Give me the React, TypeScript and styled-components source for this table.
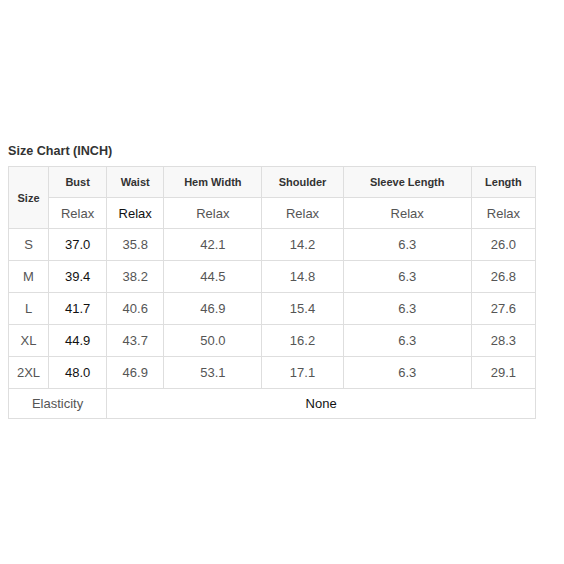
import React from 'react'
import styled, { createGlobalStyle } from 'styled-components'

const GlobalStyle = createGlobalStyle`
  body {
    margin: 0;
    background: #fff;
    font-family: "Liberation Sans", Arial, sans-serif;
  }
`

const columns = [
  { label: 'Bust', width: 58 },
  { label: 'Waist', width: 57 },
  { label: 'Hem Width', width: 98 },
  { label: 'Shoulder', width: 81 },
  { label: 'Sleeve Length', width: 128 },
  { label: 'Length', width: 64 }
]

const rows = [
  { size: 'S', values: ['37.0', '35.8', '42.1', '14.2', '6.3', '26.0'] },
  { size: 'M', values: ['39.4', '38.2', '44.5', '14.8', '6.3', '26.8'] },
  { size: 'L', values: ['41.7', '40.6', '46.9', '15.4', '6.3', '27.6'] },
  { size: 'XL', values: ['44.9', '43.7', '50.0', '16.2', '6.3', '28.3'] },
  { size: '2XL', values: ['48.0', '46.9', '53.1', '17.1', '6.3', '29.1'] }
]

export default function App() {
  return (
    <>
      <GlobalStyle />
      <PageWrapper>
        <Title>Size Chart (INCH)</Title>
        <Table>
          <colgroup>
            <col style={{ width: 40 }} />
            {columns.map(c => (
              <col key={c.label} style={{ width: c.width }} />
            ))}
          </colgroup>
          <tbody>
            <Row $h={31}>
              <HeadCell rowSpan={2}>Size</HeadCell>
              {columns.map(c => (
                <HeadCell key={c.label}>{c.label}</HeadCell>
              ))}
            </Row>
            <Row $h={31}>
              {columns.map((c, i) => (
                <Cell key={c.label} $dark={i === 1}>Relax</Cell>
              ))}
            </Row>
            {rows.map(r => (
              <Row key={r.size} $h={32}>
                <Cell>{r.size}</Cell>
                {r.values.map((v, i) => (
                  <Cell key={i} $dark={i === 0}>{v}</Cell>
                ))}
              </Row>
            ))}
            <Row $h={30}>
              <Cell colSpan={2}>Elasticity</Cell>
              <Cell colSpan={5} $dark>None</Cell>
            </Row>
          </tbody>
        </Table>
      </PageWrapper>
    </>
  )
}

const PageWrapper = styled.div`
  padding: 143px 8px 0;
`

const Title = styled.div`
  font-size: 12.6px;
  font-weight: 700;
  color: #333;
  margin-bottom: 6px;
  line-height: 17px;
`

const Table = styled.table`
  border-collapse: collapse;
  table-layout: fixed;
  width: 528px;
`

const Row = styled.tr<{ $h: number }>`
  height: ${p => p.$h}px;
`

const HeadCell = styled.td`
  border: 1px solid #dedede;
  background: #f8f8f8;
  color: #333;
  font-size: 11px;
  font-weight: 700;
  text-align: center;
  vertical-align: middle;
  padding: 0;
`

const Cell = styled.td<{ $dark?: boolean }>`
  border: 1px solid #dedede;
  background: #fff;
  color: ${p => (p.$dark ? '#111' : '#555')};
  font-size: 13px;
  text-align: center;
  vertical-align: middle;
  padding: 0;
`
